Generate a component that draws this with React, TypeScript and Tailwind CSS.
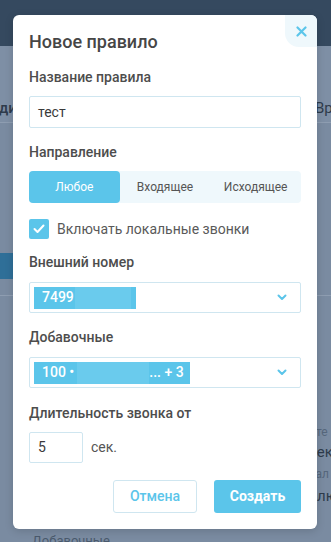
import React from "react";

const Chevron = () => (
  <svg width="10" height="7" viewBox="0 0 10 7" fill="none">
    <path d="M1.5 1.5 L5 5 L8.5 1.5" stroke="#5bc5ea" strokeWidth="2" strokeLinecap="round" strokeLinejoin="round" />
  </svg>
);

export default function App() {
  return (
    <div className="relative w-[331px] h-[542px] overflow-hidden bg-[#7a8ba1]" style={{ fontFamily: "Roboto, 'Noto Sans', sans-serif" }}>
      {/* background page */}
      <div className="flex flex-col">
        <div className="h-[46px] bg-[#35495f]" />
        <div className="h-[76px] bg-[#7e8fa5] flex items-end justify-between pb-[4px]">
          <span className="text-[15px] leading-[20px] font-medium text-[#2e3b4b] -ml-[1px]">диж</span>
          <span className="text-[15px] leading-[20px] text-[#2e3b4b] w-[16px] overflow-hidden whitespace-nowrap">Вр</span>
        </div>
        <div className="h-px bg-[#8e9db1]" />
        <div className="h-[172px] flex flex-col">
          <div className="mt-[130px] h-[26px] w-[14px] bg-[#2f6f98]" />
        </div>
        <div className="h-px bg-[#8e9db1]" />
        <div className="flex flex-col items-end pt-[128px]">
          <div className="w-[18px] overflow-hidden whitespace-nowrap flex flex-col">
            <span className="text-[12px] leading-[16px] text-[#56677c] -ml-[4px]">ите</span>
            <span className="mt-[2px] text-[15px] leading-[20px] text-[#2e3b4b] -ml-[4px]">сек</span>
            <span className="mt-[4px] text-[12px] leading-[16px] text-[#56677c] -ml-[4px]">кал</span>
            <span className="mt-[4px] text-[15px] leading-[20px] text-[#2e3b4b] -ml-[4px]">клю</span>
          </div>
        </div>
        <div className="pl-[32px] mt-[22px]">
          <span className="text-[13px] leading-[16px] text-[#4a5a6d]">Добавочные</span>
        </div>
      </div>

      {/* modal */}
      <div className="absolute left-[13px] top-[15px] w-[304px] rounded-[6px] bg-white shadow-[0_2px_8px_rgba(0,0,0,0.15)] px-[16px] pt-[15px] pb-[16px]">
        <div className="absolute right-0 top-0 w-[32px] h-[32px] rounded-tr-[6px] rounded-bl-[14px] bg-[#eff8fc] flex items-center justify-center">
          <svg width="11" height="11" viewBox="0 0 11 11">
            <path d="M1.5 1.5 L9.5 9.5 M9.5 1.5 L1.5 9.5" stroke="#5bc5ea" strokeWidth="2.2" strokeLinecap="round" />
          </svg>
        </div>

        <div className="text-[18px] leading-[24px] font-medium text-[#464646]">Новое правило</div>

        <div className="mt-[14px] text-[14px] leading-[18px] font-medium text-[#4d4d4d]">Название правила</div>
        <div className="mt-[10px] h-[32px] border border-[#cfe6f0] rounded-[2px] flex items-center px-[8px] text-[14px] text-[#3a3a3a]">тест</div>

        <div className="mt-[15px] text-[14px] leading-[18px] font-medium text-[#4d4d4d]">Направление</div>
        <div className="mt-[10px] h-[32px] rounded-[4px] bg-[#eff8fc] grid grid-cols-3 text-[12px]">
          <div className="rounded-[4px] bg-[#5bc5ea] text-white flex items-center justify-center">Любое</div>
          <div className="flex items-center justify-center text-[#555]">Входящее</div>
          <div className="flex items-center justify-center text-[#555]">Исходящее</div>
        </div>

        <div className="mt-[16px] flex items-center gap-[8px]">
          <div className="w-[20px] h-[20px] rounded-[2px] bg-[#5bc5ea] flex items-center justify-center">
            <svg width="12" height="10" viewBox="0 0 12 10" fill="none">
              <path d="M1.5 5 L4.5 8 L10.5 1.5" stroke="white" strokeWidth="2" strokeLinecap="round" strokeLinejoin="round" />
            </svg>
          </div>
          <span className="text-[14px] leading-[20px] text-[#595959]">Включать локальные звонки</span>
        </div>

        <div className="mt-[14px] text-[14px] leading-[18px] font-medium text-[#4d4d4d]">Внешний номер</div>
        <div className="mt-[11px] h-[31px] border border-[#cfe6f0] rounded-[2px] flex items-center justify-between pl-[4px] pr-[13px]">
          <div className="h-[22px] w-[102px] bg-[#5bc5ea] flex items-center pl-[8px] text-[14px] font-medium text-white">
            <span>7499</span>
            <span className="ml-px h-[22px] w-[56px] bg-[#6acbed]" />
          </div>
          <Chevron />
        </div>

        <div className="mt-[15px] text-[14px] leading-[18px] font-medium text-[#4d4d4d]">Добавочные</div>
        <div className="mt-[11px] h-[31px] border border-[#cfe6f0] rounded-[2px] flex items-center justify-between pl-[4px] pr-[13px]">
          <div className="h-[22px] w-[156px] bg-[#5bc5ea] flex items-center pl-[8px] text-[14px] font-medium text-white">
            <span>100 •</span>
            <span className="ml-[3px] h-[22px] w-[72px] bg-[#6acbed]" />
            <span>... + 3</span>
          </div>
          <Chevron />
        </div>

        <div className="mt-[16px] text-[14px] leading-[18px] font-medium text-[#4d4d4d]">Длительность звонка от</div>
        <div className="mt-[10px] flex items-center gap-[8px]">
          <div className="w-[54px] h-[31px] border border-[#cfe6f0] rounded-[2px] flex items-center px-[8px] text-[14px] text-[#3a3a3a]">5</div>
          <span className="text-[14px] text-[#555]">сек.</span>
        </div>

        <div className="mt-[17px] flex justify-end gap-[17px]">
          <div className="w-[84px] h-[33px] border border-[#cfe6f0] rounded-[3px] flex items-center justify-center text-[14px] font-medium text-[#5bc5ea]">Отмена</div>
          <div className="w-[87px] h-[33px] rounded-[3px] bg-[#5bc5ea] flex items-center justify-center text-[14px] font-bold text-white">Создать</div>
        </div>
      </div>
    </div>
  );
}
